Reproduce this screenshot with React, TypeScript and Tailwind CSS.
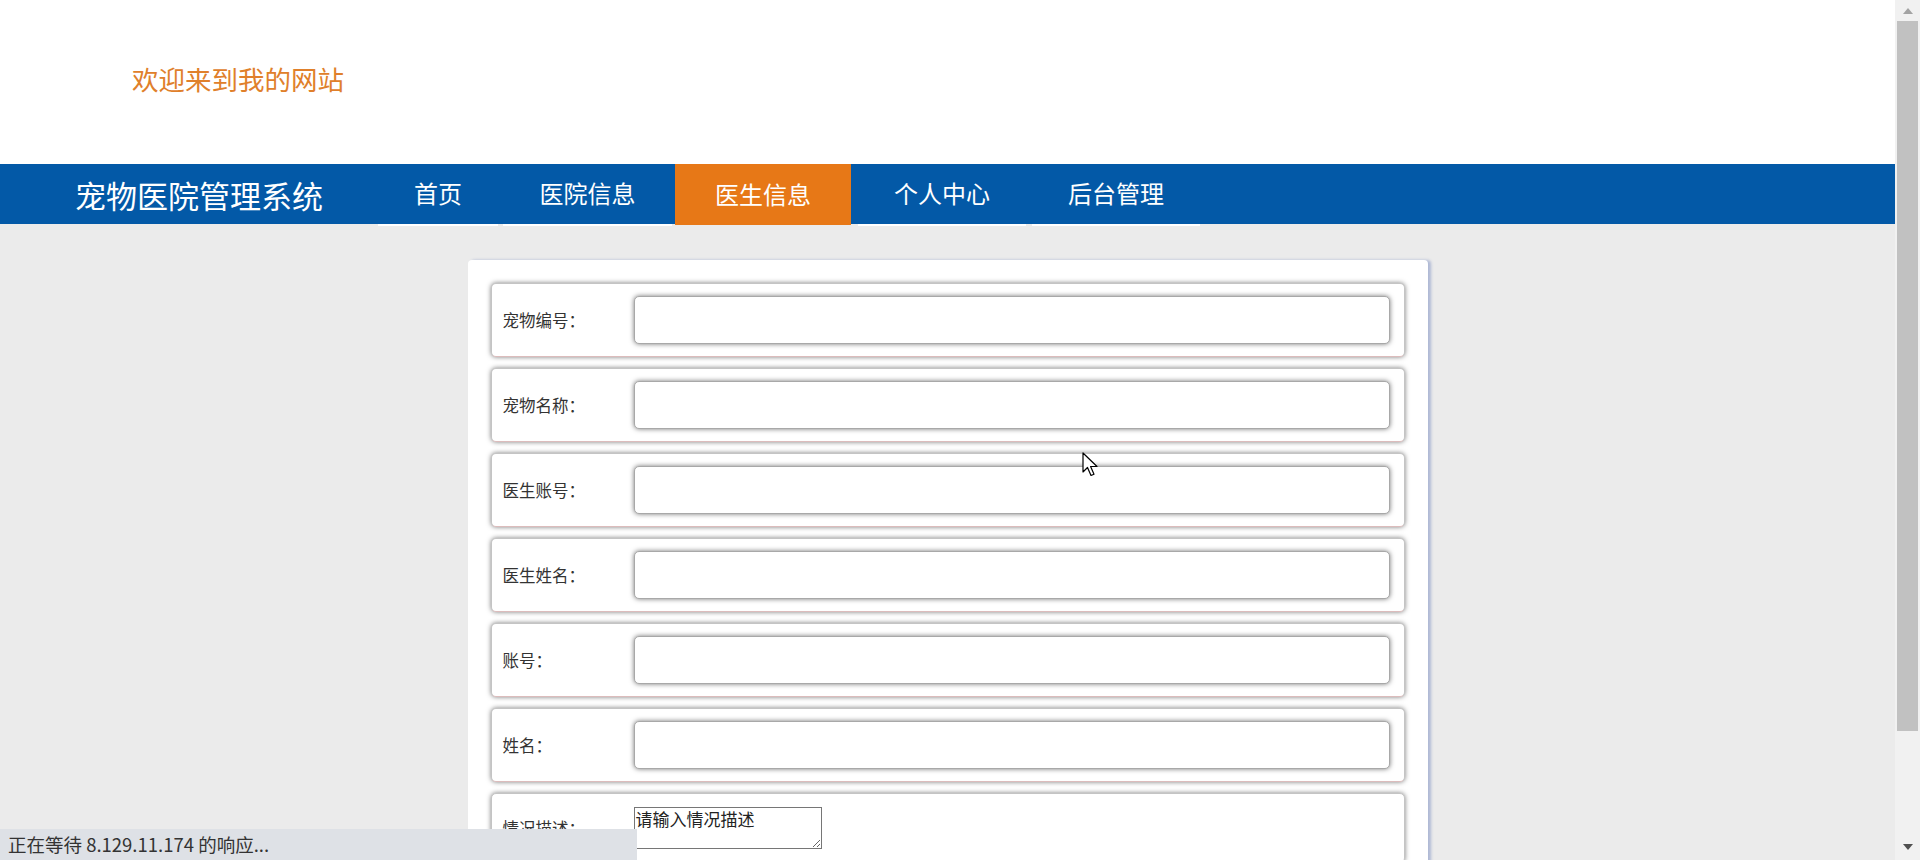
import React from "react";

const navItems = [
  { label: "首页", w: "w-[120px]", ml: "ml-0", active: false },
  { label: "医院信息", w: "w-[169px]", ml: "ml-[5px]", active: false },
  { label: "医生信息", w: "w-[176px]", ml: "ml-[3px]", active: true },
  { label: "个人中心", w: "w-[168px]", ml: "ml-[7px]", active: false },
  { label: "后台管理", w: "w-[168px]", ml: "ml-[6px]", active: false },
];

const fields = ["宠物编号：", "宠物名称：", "医生账号：", "医生姓名：", "账号：", "姓名："];

function FieldRow({ label }: { label: string }) {
  return (
    <div className="h-[74px] flex items-center pl-[11px] pr-[14px] bg-white rounded-[5px] border border-[#c4c4c4] border-b-[#dcbcbc] shadow-[0_0_5px_#7d7d7d]">
      <label className="w-[131px] shrink-0 text-[16.5px] leading-none text-[#333]">{label}</label>
      <input
        type="text"
        className="flex-1 h-[48px] bg-white rounded-[5px] border border-[#a8a8a8] shadow-[0_0_5px_#777] outline-none px-2"
      />
    </div>
  );
}

export default function App() {
  return (
    <div className="relative w-[1920px] h-[860px] overflow-hidden flex font-['Noto_Sans_CJK_SC','Microsoft_YaHei',sans-serif]">
      <div className="w-[1895px] h-full flex flex-col bg-[#ebebeb]">
        <header className="h-[164px] shrink-0 bg-white flex items-center pl-[132px] pb-[5px]">
          <span className="text-[26.5px] leading-none text-[#e0802b]">欢迎来到我的网站</span>
        </header>

        <nav className="relative z-10 h-[60px] shrink-0 bg-[#0359a7] flex items-start">
          <div className="w-[378px] h-[60px] shrink-0 flex items-center pl-[75px]">
            <span className="text-[31px] leading-none text-white">宠物医院管理系统</span>
          </div>
          <ul className="flex">
            {navItems.map((item) => (
              <li
                key={item.label}
                className={
                  item.active
                    ? `${item.w} ${item.ml} h-[61px] flex items-center justify-center bg-[#e77817] text-white text-[24px] leading-none`
                    : `${item.w} ${item.ml} h-[62px] flex items-center justify-center border-b-2 border-white text-white text-[24px] leading-none`
                }
              >
                <span className="-mt-[2px]">{item.label}</span>
              </li>
            ))}
          </ul>
        </nav>

        <main className="flex justify-center pt-[36px]">
          <div className="w-[960px] bg-white rounded-[4px] shadow-[3px_0_3px_#aeb8d4] px-[23px] pt-[23px] pb-6 flex flex-col gap-[11px]">
            {fields.map((f) => (
              <FieldRow key={f} label={f} />
            ))}
            <div className="flex items-center pl-[11px] pr-[14px] py-[13px] bg-white rounded-[5px] border border-[#c4c4c4] shadow-[0_0_5px_#7d7d7d]">
              <label className="w-[131px] shrink-0 text-[16.5px] leading-none text-[#333]">情况描述：</label>
              <textarea
                defaultValue="请输入情况描述"
                className="w-[188px] h-[42px] border border-[#767676] pl-[1px] py-0 text-[17px] leading-[21px] text-[#222] outline-none"
              />
            </div>
          </div>
        </main>
      </div>

      <div className="w-[25px] h-full bg-[#f1f1f1] flex flex-col items-center">
        <div className="h-[21px] w-full flex items-center justify-center">
          <svg width="12" height="8" viewBox="0 0 12 8">
            <path d="M6 1 L11 7 L1 7 Z" fill="#a3a3a3" />
          </svg>
        </div>
        <div className="w-[21px] h-[710px] bg-[#c1c1c1]" />
        <div className="flex-1 w-full flex items-end justify-center pb-[9px]">
          <svg width="12" height="8" viewBox="0 0 12 8">
            <path d="M1 1 L11 1 L6 7 Z" fill="#505050" />
          </svg>
        </div>
      </div>

      <div className="absolute left-0 bottom-0 w-[637px] h-[31px] bg-[#dee1e6] flex items-center pl-[8px] text-[18.5px] leading-none text-[#333]">
        正在等待 8.129.11.174 的响应...
      </div>

      <svg className="absolute left-[1082px] top-[452px]" width="18" height="26" viewBox="0 0 18 26">
        <path d="M1 1 L1 20 L5.5 15.5 L9 23.5 L12 22.2 L8.6 14.5 L15 14.5 Z" fill="white" stroke="black" strokeWidth="1.2" strokeLinejoin="round" />
      </svg>
    </div>
  );
}
